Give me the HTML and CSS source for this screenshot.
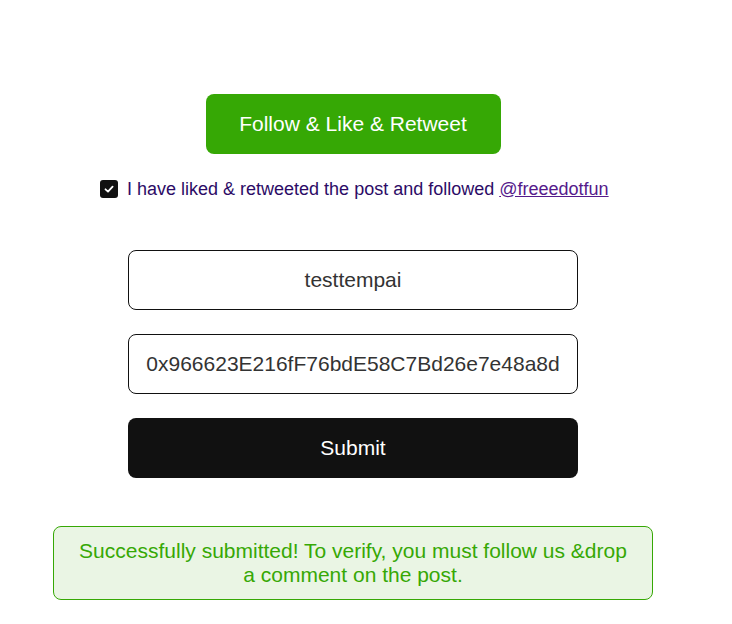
FILE: index.html
```html
<!DOCTYPE html>
<html>
<head>
<meta charset="utf-8">
<link rel="stylesheet" href="styles.css">
</head>
<body>
<main class="page">
  <button class="follow-btn">Follow &amp; Like &amp; Retweet</button>
  <label class="check-row">
    <span class="check-box"><svg width="12" height="12" viewBox="0 0 12 12"><path d="M2.5 6.3 L5 8.6 L9.6 3.6" fill="none" stroke="#fff" stroke-width="1.8" stroke-linecap="round" stroke-linejoin="round"/></svg></span>
    <span class="check-text">I have liked &amp; retweeted the post and followed <a href="#" class="handle">@freeedotfun</a></span>
  </label>
  <form class="form">
    <div class="field">testtempai</div>
    <div class="field">0x966623E216fF76bdE58C7Bd26e7e48a8d</div>
    <button type="button" class="submit-btn">Submit</button>
  </form>
  <div class="notice">Successfully submitted! To verify, you must follow us &amp;drop a comment on the post.</div>
</main>
</body>
</html>
```

FILE: styles.css
```css
html, body {
  margin: 0;
  padding: 0;
  background: #fff;
}
.page {
  width: 706px;
  padding-top: 94px;
  display: flex;
  flex-direction: column;
  align-items: center;
  font-family: "Liberation Sans", Arial, sans-serif;
}
.follow-btn {
  width: 295px;
  height: 60px;
  border: none;
  border-radius: 8px;
  background: #36a805;
  color: #fff;
  font-family: "Liberation Sans", Arial, sans-serif;
  font-size: 21px;
  padding: 0;
}
.check-row {
  align-self: flex-start;
  margin-left: 100px;
  margin-top: 26px;
  display: flex;
  align-items: center;
  gap: 9px;
  font-size: 18px;
  color: #2c0b66;
  height: 18px;
}
.check-box {
  width: 18px;
  height: 18px;
  border-radius: 3px;
  background: #111;
  display: flex;
  align-items: center;
  justify-content: center;
}
.check-box svg { display: block; }
.handle {
  color: #551a8b;
}
.form {
  margin-top: 52px;
  display: flex;
  flex-direction: column;
  gap: 24px;
}
.field {
  box-sizing: border-box;
  width: 450px;
  height: 60px;
  border: 1px solid #111;
  border-radius: 8px;
  display: flex;
  align-items: center;
  justify-content: center;
  font-size: 21px;
  color: #333;
}
.submit-btn {
  width: 450px;
  height: 60px;
  border: none;
  border-radius: 8px;
  background: #111;
  color: #fff;
  font-family: "Liberation Sans", Arial, sans-serif;
  font-size: 21px;
  padding: 0;
}
.notice {
  box-sizing: border-box;
  margin-top: 48px;
  width: 600px;
  height: 74px;
  border: 1px solid #36a805;
  border-radius: 8px;
  background: #eaf5e4;
  color: #36a805;
  font-size: 21px;
  line-height: 24px;
  text-align: center;
  padding: 12px 24px;
}
```
